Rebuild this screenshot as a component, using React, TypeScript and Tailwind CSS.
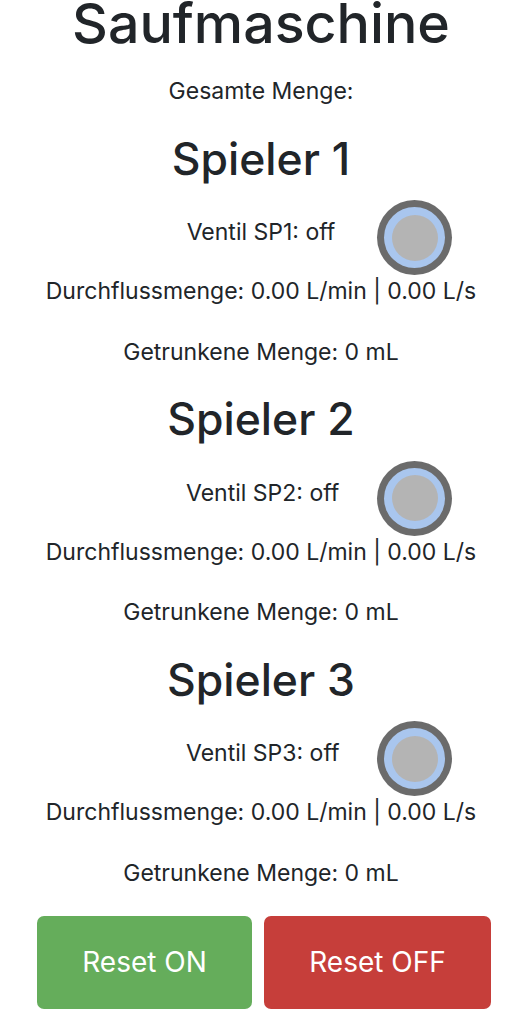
import React from "react";

function Valve() {
  return (
    <div className="w-[75px] h-[75px] rounded-full bg-[#6b6b6b] p-[7px]">
      <div className="w-full h-full rounded-full bg-[#a9c6ee] p-[7.5px]">
        <div className="w-full h-full rounded-full bg-[#b4b4b4]" />
      </div>
    </div>
  );
}

function Player({ n }: { n: number }) {
  return (
    <div className="flex flex-col">
      <div className="mt-[29.4px] h-[48px] text-[44.5px] leading-[48px] text-center font-medium">Spieler {n}</div>
      <div className="mt-[17.5px] h-[74px] grid grid-cols-[1fr_150px_1fr]">
        <div />
        <div className="mt-[18px] text-[23px] leading-[28px] text-center whitespace-nowrap">Ventil SP{n}: off</div>
        <div className="ml-[41px]">
          <Valve />
        </div>
      </div>
      <div className="mt-[3px] text-[23px] leading-[28px] text-center">Durchflussmenge: 0.00 L/min | 0.00 L/s</div>
      <div className="mt-[32.6px] text-[23px] leading-[28px] text-center">Getrunkene Menge: 0 mL</div>
    </div>
  );
}

export default function App() {
  return (
    <div className="w-[522px] h-[1024px] bg-white text-[#212529] overflow-hidden" style={{ fontFamily: "Inter, 'Noto Sans', sans-serif" }}>
      <div className="h-[46px] text-[55.5px] leading-[46px] text-center font-medium">Saufmaschine</div>
      <div className="mt-[31.4px] text-[23px] leading-[28px] text-center">Gesamte Menge:</div>
      <Player n={1} />
      <Player n={2} />
      <Player n={3} />
      <div className="mt-[29px] flex pl-[37px] gap-[12px]">
        <button className="w-[215px] h-[93px] rounded-[7px] bg-[#65ad5b] text-white text-[28px]">Reset ON</button>
        <button className="w-[227px] h-[93px] rounded-[7px] bg-[#c63e3a] text-white text-[28px]">Reset OFF</button>
      </div>
    </div>
  );
}
